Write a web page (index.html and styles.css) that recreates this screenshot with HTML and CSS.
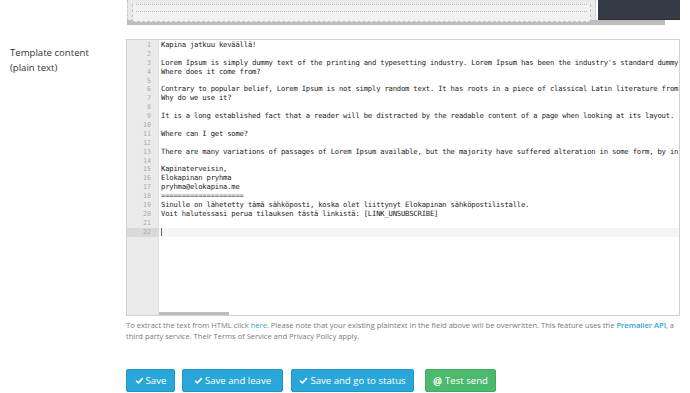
FILE: index.html
```
<!DOCTYPE html>
<html>
<head>
<meta charset="utf-8">
<link rel="stylesheet" href="styles.css">
</head>
<body>
<div class="page">
  <div class="top-row">
    <div class="top-preview">
      <div class="preview-canvas"><div class="preview-inner"><div class="preview-line"></div></div></div>
      <div class="preview-dark"></div>
    </div>
    <div class="preview-scroll"></div>
  </div>

  <div class="form-row">
    <label class="field-label">Template content<br>(plain text)</label>
    <div class="field">
      <div class="editor">
        <div class="gutter">
          <div class="ln">1</div><div class="ln">2</div><div class="ln">3</div><div class="ln">4</div><div class="ln">5</div><div class="ln">6</div><div class="ln">7</div><div class="ln">8</div><div class="ln">9</div><div class="ln">10</div><div class="ln">11</div><div class="ln">12</div><div class="ln">13</div><div class="ln">14</div><div class="ln">15</div><div class="ln">16</div><div class="ln">17</div><div class="ln">18</div><div class="ln">19</div><div class="ln">20</div><div class="ln">21</div><div class="ln active">22</div>
        </div>
        <div class="code">
          <div class="cl">Kapina jatkuu keväällä!</div>
          <div class="cl"> </div>
          <div class="cl">Lorem Ipsum is simply dummy text of the printing and typesetting industry. Lorem Ipsum has been the industry's standard dummy text ever since the 1500s.</div>
          <div class="cl">Where does it come from?</div>
          <div class="cl"> </div>
          <div class="cl">Contrary to popular belief, Lorem Ipsum is not simply random text. It has roots in a piece of classical Latin literature from 45 BC.</div>
          <div class="cl">Why do we use it?</div>
          <div class="cl"> </div>
          <div class="cl">It is a long established fact that a reader will be distracted by the readable content of a page when looking at its layout.</div>
          <div class="cl"> </div>
          <div class="cl">Where can I get some?</div>
          <div class="cl"> </div>
          <div class="cl">There are many variations of passages of Lorem Ipsum available, but the majority have suffered alteration in some form, by injected humour.</div>
          <div class="cl"> </div>
          <div class="cl">Kapinaterveisin,</div>
          <div class="cl">Elokapinan pryhma</div>
          <div class="cl">pryhma@elokapina.me</div>
          <div class="cl">====================</div>
          <div class="cl">Sinulle on lähetetty tämä sähköposti, koska olet liittynyt Elokapinan sähköpostilistalle.</div>
          <div class="cl">Voit halutessasi perua tilauksen tästä linkistä: [LINK_UNSUBSCRIBE]</div>
          <div class="cl"> </div>
          <div class="cl active"><span class="cursor"></span></div>
          <div class="hscroll"></div>
        </div>
      </div>
      <p class="help">To extract the text from HTML click <a class="link">here</a>. Please note that your existing plaintext in the field above will be overwritten. This feature uses the <a class="link strong">Premailer API</a>, a third party service. Their Terms of Service and Privacy Policy apply.</p>
    </div>
  </div>

  <div class="actions">
    <button class="btn btn-blue btn-save"><svg class="ico" viewBox="0 0 12 12"><path d="M1.5 6.3 L4.5 9.2 L10.5 2.8" fill="none" stroke="#fff" stroke-width="2.2"/></svg>Save</button>
    <button class="btn btn-blue btn-leave"><svg class="ico" viewBox="0 0 12 12"><path d="M1.5 6.3 L4.5 9.2 L10.5 2.8" fill="none" stroke="#fff" stroke-width="2.2"/></svg>Save and leave</button>
    <button class="btn btn-blue btn-status"><svg class="ico" viewBox="0 0 12 12"><path d="M1.5 6.3 L4.5 9.2 L10.5 2.8" fill="none" stroke="#fff" stroke-width="2.2"/></svg>Save and go to status</button>
    <button class="btn btn-green btn-test"><span class="at">@</span>Test send</button>
  </div>
</div>
</body>
</html>
```
FILE: styles.css
```
html, body {
  margin: 0;
  padding: 0;
  background: #fff;
}
body {
  font-family: "Open Sans", "Noto Sans", sans-serif;
  color: #444;
  width: 690px;
  height: 393px;
  overflow: hidden;
}
.page {
  display: flex;
  flex-direction: column;
}
.top-row {
  margin-left: 127px;
  width: 553px;
  height: 39px;
}
.top-preview {
  display: flex;
  height: 20px;
}
.preview-canvas {
  width: 469px;
  background: #e9e9e9;
  border-left: 1px dotted #bbb;
  border-right: 1px dotted #bbb;
  box-sizing: border-box;
  padding: 0 4px 2px 4px;
}
.preview-inner {
  height: 18px;
  border: 1px dashed #c4c4c4;
  border-top: none;
  box-sizing: border-box;
  background: #f2f2f2;
  padding: 0 3px;
}
.preview-line {
  margin-top: 4px;
  height: 6px;
  border-top: 1px dotted #bbb;
  border-bottom: 1px dotted #bbb;
}
.preview-dark {
  margin-left: 2px;
  width: 82px;
  background: #343a46;
  border-bottom: 1px solid #2a2f38;
}
.preview-scroll {
  width: 538px;
  height: 5px;
  background: #bdbdbd;
}
.form-row {
  display: grid;
  grid-template-columns: 126px 556px;
}
.field-label {
  padding: 6px 0 0 10px;
  font-size: 9.6px;
  line-height: 15px;
  color: #333;
}
.editor {
  position: relative;
  width: 554px;
  height: 277px;
  border: 1px solid #d0d0d0;
  box-sizing: border-box;
  display: flex;
  overflow: hidden;
}
.gutter {
  width: 31px;
  flex: none;
  background: #ebebeb;
  border-right: 1px solid #dedede;
  padding-top: 1px;
}
.ln {
  font-family: "DejaVu Sans Mono", monospace;
  font-size: 6.6px;
  line-height: 8.9px;
  height: 8.9px;
  text-align: right;
  padding-right: 7px;
  color: #a8a8a8;
}
.ln.active {
  background: #d9d9d9;
}
.code {
  flex: 1;
  position: relative;
  padding-top: 1px;
  min-width: 0;
}
.cl {
  font-family: "DejaVu Sans Mono", monospace;
  font-size: 7.2px;
  letter-spacing: -0.19px;
  line-height: 8.9px;
  height: 8.9px;
  white-space: pre;
  padding-left: 2px;
  color: #222;
}
.cl.active {
  background: #f5f5f5;
}
.cursor {
  display: inline-block;
  width: 1px;
  height: 8px;
  background: #666;
  vertical-align: top;
  margin-top: 0.5px;
}
.hscroll {
  position: absolute;
  left: 0;
  bottom: 0;
  width: 70px;
  height: 3px;
  background: #bbbbbb;
}
.help {
  margin: 4px 0 0 0;
  font-size: 7.6px;
  letter-spacing: -0.02px;
  line-height: 11px;
  color: #7a7a7a;
}
.link {
  color: #2aa4d5;
  text-decoration: none;
}
.link.strong {
  font-weight: 600;
}
.actions {
  display: flex;
  margin: 27px 0 0 126px;
}
.btn {
  height: 23px;
  border-radius: 2px;
  font-family: "Open Sans", "Noto Sans", sans-serif;
  font-size: 9.6px;
  color: #fff;
  padding: 0;
  display: flex;
  align-items: center;
  justify-content: center;
  gap: 2px;
  cursor: pointer;
  box-sizing: border-box;
}
.btn-blue {
  background: #29a7da;
  border: 1px solid #2195c6;
}
.btn-green {
  background: #4bba6d;
  border: 1px solid #43a862;
}
.btn-save { width: 49px; }
.btn-leave { width: 101px; margin-left: 7px; }
.btn-status { width: 123px; margin-left: 8px; }
.btn-test { width: 71px; margin-left: 11px; }
.ico {
  width: 9px;
  height: 9px;
}
.at {
  font-weight: 700;
  font-size: 10px;
  margin-right: 1px;
}
```
